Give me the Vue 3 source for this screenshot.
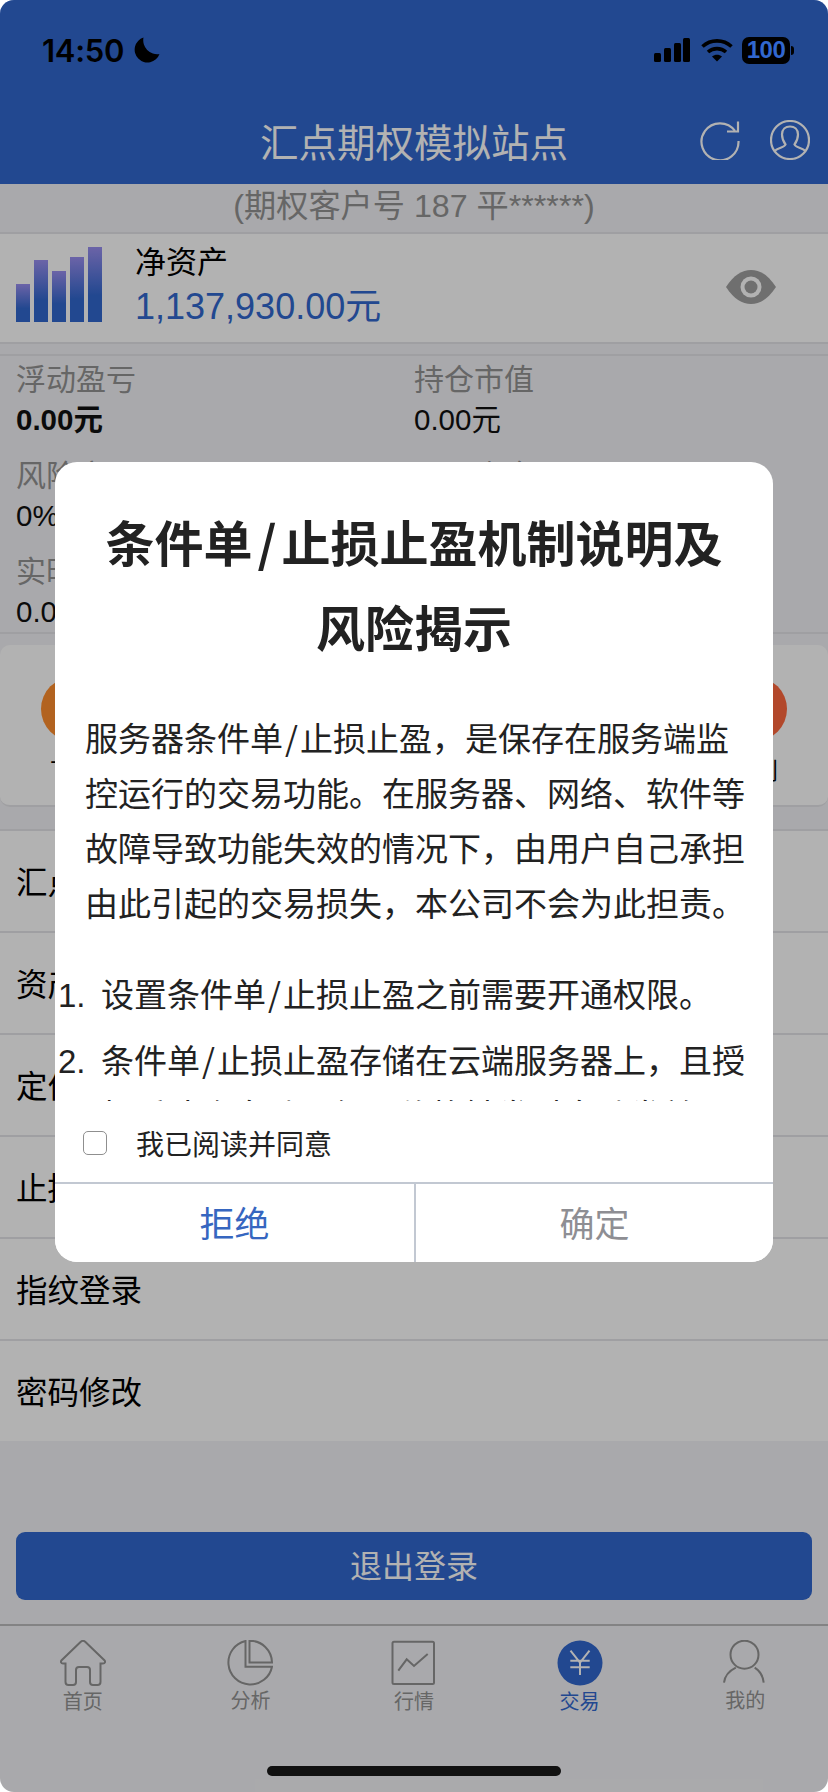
<template>
  <div class="phone">
    <header class="top">
      <div class="status">
        <div class="status-left">
          <span class="clock">14:50</span>
          <svg class="moon" viewBox="0 0 26 26"><path d="M9.5 .5A12.8 12.8 0 1 0 25.5 17A14 14 0 0 1 9.5 .5Z" fill="#000" /></svg>
        </div>
        <div class="status-right">
          <svg class="signal" viewBox="0 0 36 24">
            <rect x="0" y="15" width="7" height="9" rx="1.5" />
            <rect x="10" y="10" width="7" height="14" rx="1.5" />
            <rect x="20" y="5" width="7" height="19" rx="1.5" />
            <rect x="29" y="0" width="7" height="24" rx="1.5" />
          </svg>
          <svg class="wifi" viewBox="0 0 32 24" fill="none" stroke="#000" stroke-width="3.6">
            <path d="M1.5 8.5C9.5 1 22.5 1 30.5 8.5" />
            <path d="M7 14C12 9.5 20 9.5 25 14" />
            <path d="M16 23.5L11 18.5C14 16 18 16 21 18.5Z" fill="#000" stroke="none" />
          </svg>
          <div class="battery"><span>100</span></div>
          <i class="battery-tip"></i>
        </div>
      </div>
      <div class="nav">
        <h1>汇点期权模拟站点</h1>
        <div class="nav-icons">
          <svg viewBox="0 0 40 40" fill="none" stroke="#fff" stroke-width="2.2">
            <path d="M35 11A18.5 18.5 0 1 0 38.5 21" />
            <path d="M27 11.5H38V1.5" />
          </svg>
          <svg viewBox="0 0 40 40" fill="none" stroke="#fff" stroke-width="2.2">
            <circle cx="20" cy="20" r="19" />
            <path d="M4.5 31C8 27.5 14.5 27.5 15.5 24.5C13 21 12 18 12 14.5C12 9.5 15.5 6.5 20 6.5C24.5 6.5 28 9.5 28 14.5C28 18 27 21 24.5 24.5C25.5 27.5 32 27.5 35.5 31" />
          </svg>
        </div>
      </div>
    </header>

    <div class="account">(期权客户号 187 平******)</div>

    <section class="asset">
      <div class="bars">
        <i v-for="h in barHeights" :key="h" :style="{ height: h + 'px' }"></i>
      </div>
      <div class="asset-text">
        <div class="asset-label">净资产</div>
        <div class="asset-value">1,137,930.00元</div>
      </div>
      <svg class="eye" viewBox="0 0 50 34">
        <path d="M0 17C8 5 16 0 25 0C34 0 42 5 50 17C42 29 34 34 25 34C16 34 8 29 0 17Z" fill="#a0a0a0" />
        <circle cx="25" cy="17" r="10.5" fill="#fff" />
        <circle cx="25" cy="17" r="6.5" fill="#a0a0a0" />
      </svg>
    </section>

    <section class="stats">
      <div v-for="s in stats" :key="s.label" class="stat">
        <div class="stat-label">{{ s.label }}</div>
        <div class="stat-value" :class="{ strong: s.strong }">{{ s.value }}</div>
      </div>
    </section>

    <section class="shortcuts">
      <div class="shortcut">
        <span class="dot orange"></span>
        <span class="shortcut-label">下单</span>
      </div>
      <div class="shortcut">
        <span class="dot red"></span>
        <span class="shortcut-label">计划</span>
      </div>
    </section>

    <ul class="menu">
      <li v-for="m in menu" :key="m">{{ m }}</li>
    </ul>

    <button class="logout">退出登录</button>

    <nav class="tabs">
      <div class="tab">
        <svg viewBox="0 0 46 46" fill="none" stroke="#929292" stroke-width="2">
          <path d="M5.5 23.5H3C1 23.5 .3 21.5 1.6 20.2L20.8 1.8C22 .7 24 .7 25.2 1.8L44.4 20.2C45.7 21.5 45 23.5 43 23.5H40.5V42C40.5 43.8 39.3 45 37.5 45H33C31 45 30 44 30 42V30C30 28 29 27 27 27H19C17 27 16 28 16 30V42C16 44 15 45 13 45H8.5C6.7 45 5.5 43.8 5.5 42Z" />
        </svg>
        <span>首页</span>
      </div>
      <div class="tab tab-raised">
        <svg viewBox="0 0 46 46" fill="none" stroke="#929292" stroke-width="2">
          <path d="M18.5 1A22 22 0 1 0 45 26.7H18.5Z" />
          <path d="M22.5 .8V22.5H45A22 22 0 0 0 22.5 .8Z" />
        </svg>
        <span>分析</span>
      </div>
      <div class="tab">
        <svg viewBox="0 0 46 46" fill="none" stroke="#929292" stroke-width="2">
          <rect x="1.5" y="1.7" width="41.5" height="42.3" rx="1.5" />
          <path d="M7.3 30.7L15.7 19.3L23 26L36.7 14" />
        </svg>
        <span>行情</span>
      </div>
      <div class="tab active">
        <svg viewBox="0 0 46 46">
          <circle cx="23" cy="23" r="22.5" fill="#3167ce" />
          <path d="M13.5 10.7L23 22.7L32.5 10.7M23 22.7V35M13.3 20.7H32.7M13.3 27.3H32.7" fill="none" stroke="#fff" stroke-width="2" />
        </svg>
        <span>交易</span>
      </div>
      <div class="tab tab-raised">
        <svg viewBox="0 0 46 46" fill="none" stroke="#929292" stroke-width="2">
          <circle cx="22.5" cy="14.7" r="14" />
          <path d="M13.8 27.7C7 31 2.8 36 2 42.7M32.7 27.7C38 31 41 36 41.7 42.7" />
        </svg>
        <span>我的</span>
      </div>
    </nav>

    <div class="overlay">
      <div class="dialog">
        <div class="dialog-scroll">
          <h2>条件单<span class="slash">/</span>止损止盈机制说明及风险揭示</h2>
          <p>服务器条件单<span class="slash">/</span>止损止盈，是保存在服务端监控运行的交易功能。在服务器、网络、软件等故障导致功能失效的情况下，由用户自己承担由此引起的交易损失，本公司不会为此担责。</p>
          <ol>
            <li><span class="num">1.</span><span>设置条件单<span class="slash">/</span>止损止盈之前需要开通权限。</span></li>
            <li><span class="num">2.</span><span>条件单<span class="slash">/</span>止损止盈存储在云端服务器上，且授权后才会自动运行，价格触发时自动发单。</span></li>
          </ol>
        </div>
        <label class="agree">
          <i class="checkbox"></i>
          <span>我已阅读并同意</span>
        </label>
        <div class="dialog-actions">
          <button class="reject">拒绝</button>
          <button class="confirm">确定</button>
        </div>
      </div>
    </div>

    <div class="home-bar"></div>
  </div>
</template>

<script setup>
const barHeights = [38, 62, 51, 65, 75]

const stats = [
  { label: '浮动盈亏', value: '0.00元', strong: true },
  { label: '持仓市值', value: '0.00元' },
  { label: '风险度', value: '0%' },
  { label: '可用资金', value: '0.00元' },
  { label: '实时权益', value: '0.00元' },
  { label: '可取资金', value: '0.00元' }
]

const menu = ['汇点期权', '资产明细', '定价设置', '止损止盈', '指纹登录', '密码修改']
</script>

<style>
body {
  background: #fff;
}
</style>

<style scoped>
.phone {
  position: relative;
  width: 828px;
  height: 1792px;
  overflow: hidden;
  border-radius: 14px;
  background: #f3f3f6;
  font-family: "Liberation Sans", "Noto Sans CJK SC", sans-serif;
  color: #000;
}

.top {
  height: 184px;
  background: #3167ce;
}

.status {
  position: relative;
  z-index: 11;
  height: 100px;
  display: flex;
  align-items: center;
  justify-content: space-between;
  padding: 0 34px 0 42px;
}

.status-left,
.status-right {
  display: flex;
  align-items: center;
}

.clock {
  font-family: Inter, "Liberation Sans", sans-serif;
  font-size: 31px;
  font-weight: 600;
  letter-spacing: -0.3px;
}

.moon {
  width: 26px;
  height: 26px;
  margin-left: 10px;
}

.signal {
  width: 36px;
  height: 24px;
  margin-right: 11px;
}

.wifi {
  width: 32px;
  height: 24px;
  margin-right: 9px;
}

.battery {
  width: 48px;
  height: 27px;
  border-radius: 7px;
  background: #000;
  display: flex;
  align-items: center;
  justify-content: center;
}

.battery span {
  font-size: 24px;
  font-weight: 700;
  letter-spacing: -0.5px;
  color: #3167ce;
}

.battery-tip {
  width: 3px;
  height: 9px;
  margin-left: 1px;
  border-radius: 0 3px 3px 0;
  background: #000;
}

.nav {
  position: relative;
  height: 80px;
  display: flex;
  align-items: center;
  justify-content: center;
}

.nav h1 {
  margin: 0;
  font-size: 38.5px;
  font-weight: 400;
  color: #fff;
}

.nav-icons {
  position: absolute;
  right: 18px;
  top: 20px;
  display: flex;
  gap: 30px;
}

.nav-icons svg {
  width: 40px;
  height: 40px;
}

.account {
  height: 50px;
  padding-bottom: 8px;
  box-sizing: border-box;
  text-align: center;
  line-height: 44px;
  font-size: 32.2px;
  color: #929292;
  border-bottom: 2px solid #e4e4e8;
}

.asset {
  height: 110px;
  box-sizing: border-box;
  background: #fff;
  border-bottom: 2px solid #e4e4e8;
  padding: 13px 52px 0 16px;
  display: flex;
  align-items: flex-start;
}

.bars {
  width: 86px;
  height: 75px;
  display: flex;
  align-items: flex-end;
  justify-content: space-between;
}

.bars i {
  width: 14px;
  background: linear-gradient(to top, #3167ce 35%, #9a8ff0);
}

.asset-text {
  margin-left: 33px;
  flex: 1;
}

.asset-label {
  margin-top: -6px;
  line-height: 44px;
  font-size: 31px;
}

.asset-value {
  line-height: 44px;
  font-size: 36px;
  color: #3167ce;
}

.eye {
  width: 50px;
  height: 34px;
  margin-top: 23px;
}

.stats {
  margin-top: 10px;
  height: 280px;
  box-sizing: border-box;
  border-top: 2px solid #e4e4e8;
  border-bottom: 2px solid #e4e4e8;
  padding: 4px 0 0 16px;
  display: grid;
  grid-template-columns: 398px 1fr;
  grid-auto-rows: 80px;
  row-gap: 16px;
}

.stat-label {
  line-height: 40px;
  font-size: 30px;
  color: #929292;
}

.stat-value {
  line-height: 40px;
  font-size: 29.5px;
  color: #111;
}

.stat-value.strong {
  font-weight: 700;
}

.shortcuts {
  margin-top: 11px;
  height: 162px;
  box-sizing: border-box;
  background: #fff;
  border-radius: 10px;
  border-bottom: 2px solid #e4e4e8;
  padding: 32px 41px 0;
  display: flex;
  justify-content: space-between;
}

.shortcut {
  width: 64px;
  display: flex;
  flex-direction: column;
  align-items: center;
}

.dot {
  width: 64px;
  height: 64px;
  border-radius: 50%;
}

.dot.orange {
  background: #ff8e2e;
}

.dot.red {
  background: #ff683e;
}

.shortcut-label {
  margin-top: 12px;
  white-space: nowrap;
  font-size: 23px;
  line-height: 36px;
}

.menu {
  margin: 22px 0 0;
  padding: 0;
  list-style: none;
  background: #fff;
}

.menu li {
  height: 102px;
  box-sizing: border-box;
  border-top: 2px solid #e4e4e8;
  padding: 0 0 3px 16px;
  display: flex;
  align-items: center;
  font-size: 31.5px;
  color: #000;
}

.logout {
  display: block;
  width: 796px;
  height: 68px;
  margin: 91px 16px 0;
  border: none;
  border-radius: 9px;
  padding: 0 0 5px;
  background: #3167ce;
  color: #fff;
  font-family: inherit;
  font-size: 32px;
}

.tabs {
  margin-top: 24px;
  border-top: 2px solid #bcbcbe;
  padding-top: 14px;
  display: grid;
  grid-template-columns: repeat(5, 1fr);
}

.tab {
  display: flex;
  flex-direction: column;
  align-items: center;
  color: #929292;
  font-size: 20px;
  line-height: 26px;
}

.tab:nth-child(2) {
  padding-left: 4px;
}

.tab svg {
  width: 46px;
  height: 46px;
  margin-bottom: 3px;
}

.tab-raised span {
  margin-top: -1px;
}

.tab.active {
  color: #3167ce;
}

.overlay {
  position: absolute;
  inset: 0;
  z-index: 10;
  background: rgba(0, 0, 0, 0.3);
}

.dialog {
  position: absolute;
  left: 55px;
  top: 462px;
  width: 718px;
  height: 800px;
  border-radius: 22px;
  background: #fff;
  overflow: hidden;
  color: #222;
  display: flex;
  flex-direction: column;
}

.dialog-scroll {
  height: 639px;
  flex: none;
  overflow: hidden;
}

.dialog h2 {
  margin: 0;
  padding: 41px 46px 0;
  text-align: center;
  font-size: 49px;
  line-height: 85px;
  font-weight: 700;
}

.slash {
  font-family: "Noto Sans CJK SC", sans-serif;
  line-height: 0;
  padding: 0 0.06em;
}

.dialog h2 .slash {
  padding: 0 0.1em;
}

.dialog p {
  margin: 39px 25px 0 30px;
  font-size: 33px;
  line-height: 55px;
}

.dialog ol {
  margin: 36px 25px 0 0;
  padding: 0;
  list-style: none;
  font-size: 33px;
  line-height: 55px;
}

.dialog li {
  display: flex;
  margin-bottom: 11px;
}

.num {
  flex: none;
  width: 43px;
  padding-left: 3px;
}

.agree {
  height: 84px;
  flex: none;
  display: flex;
  align-items: center;
  padding-left: 28px;
  box-sizing: border-box;
  font-size: 28px;
}

.checkbox {
  width: 24px;
  height: 24px;
  box-sizing: border-box;
  border: 1.5px solid #8f8f8f;
  border-radius: 5px;
  margin-right: 29px;
}

.dialog-actions {
  flex: 1;
  margin-top: -3px;
  border-top: 2px solid #c2c8d2;
  display: flex;
}

.dialog-actions button {
  flex: 1;
  border: none;
  background: #fff;
  padding: 0 0 4px;
  font-family: inherit;
  font-size: 35px;
}

.dialog-actions .reject {
  flex: 0 0 361px;
  color: #3666c0;
  border-right: 2px solid #c2c8d2;
}

.confirm {
  color: #8e8e93;
}

.home-bar {
  position: absolute;
  z-index: 11;
  left: 267px;
  top: 1766px;
  width: 294px;
  height: 10px;
  border-radius: 5px;
  background: #111;
}
</style>
